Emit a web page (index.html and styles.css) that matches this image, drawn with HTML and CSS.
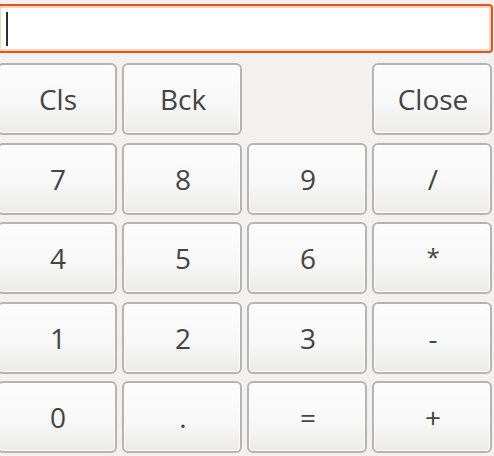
FILE: index.html
```html
<!DOCTYPE html>
<html>
<head>
<meta charset="utf-8">
<link rel="stylesheet" href="styles.css">
</head>
<body>
<div class="calc">
  <div class="entry"><span class="caret"></span></div>
  <div class="keys">
    <button class="key">Cls</button>
    <button class="key">Bck</button>
    <span class="blank"></span>
    <button class="key">Close</button>
    <button class="key">7</button>
    <button class="key">8</button>
    <button class="key">9</button>
    <button class="key">/</button>
    <button class="key">4</button>
    <button class="key">5</button>
    <button class="key">6</button>
    <button class="key star">*</button>
    <button class="key">1</button>
    <button class="key">2</button>
    <button class="key">3</button>
    <button class="key">-</button>
    <button class="key">0</button>
    <button class="key">.</button>
    <button class="key">=</button>
    <button class="key">+</button>
  </div>
</div>
</body>
</html>
```

FILE: styles.css
```css
html, body {
  margin: 0;
  padding: 0;
  background: #f2f1f0;
  overflow: hidden;
}
body {
  width: 494px;
  height: 456px;
}
.calc {
  margin-left: -3px;
  width: 496px;
  padding-top: 4px;
  font-family: "Open Sans", "Noto Sans", sans-serif;
  color: #3c3c3c;
}
.entry {
  box-sizing: border-box;
  height: 49px;
  border: 2px solid #e0561f;
  border-radius: 4px;
  background: #ffffff;
  box-shadow: inset 0 0 0 2px #fdd3c0;
  display: flex;
  align-items: center;
  padding-left: 7px;
}
.caret {
  width: 2px;
  height: 34px;
  background: #2f2f2f;
}
.keys {
  margin-top: 10px;
  display: grid;
  grid-template-columns: repeat(4, 120px);
  grid-auto-rows: 72px;
  column-gap: 5px;
  row-gap: 7.5px;
}
.key {
  box-sizing: border-box;
  margin: 0;
  padding: 0 0 0 2px;
  border: 2px solid #b6b4b2;
  border-radius: 6px;
  background: linear-gradient(#fcfcfc 0%, #f8f8f8 55%, #ecebea 100%);
  box-shadow: inset 0 0 0 1px #ffffff;
  font-family: "Open Sans", "Noto Sans", sans-serif;
  font-size: 28px;
  color: #444444;
  display: flex;
  align-items: center;
  justify-content: center;
}
.star {
  font-size: 24px;
  padding-bottom: 4px;
}
```
